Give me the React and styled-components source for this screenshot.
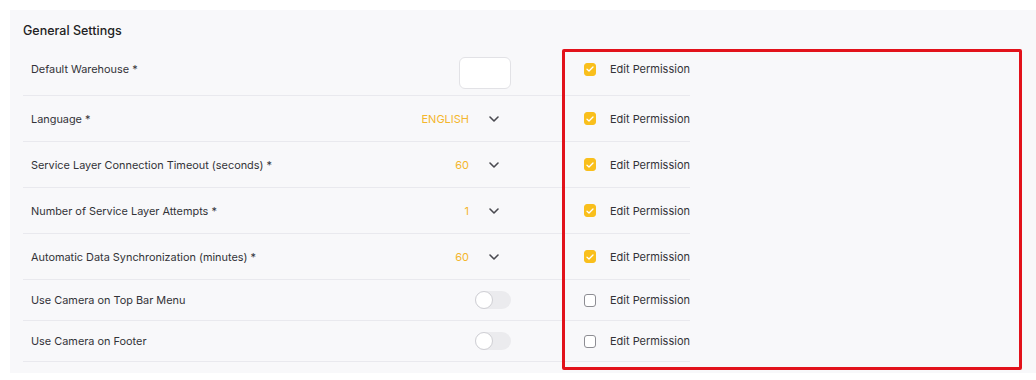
import React from 'react';
import styled, { createGlobalStyle } from 'styled-components';

const theme = {
    panel: '#f8f8fa',
    line: '#e9e9ee',
    text: '#333338',
    accent: '#f4b62c',
    check: '#f9bf1c',
    font: 'Inter, "Noto Sans", sans-serif'
};

const GlobalStyle = createGlobalStyle`
    body {
        margin: 0;
        background: #ffffff;
        font-family: ${theme.font};
        color: ${theme.text};
    }
`;

const Page = styled.div`
    padding: 10px 0 0 10px;
`;

const Panel = styled.section`
    position: relative;
    background: ${theme.panel};
    padding: 13px 13px 12px;
    height: 338px;
`;

const Title = styled.h2`
    margin: 0 0 11px;
    font-size: 12.5px;
    line-height: 16px;
    font-weight: 500;
    color: #222;
`;

const List = styled.div`
    width: 667px;
`;

const Row = styled.div`
    box-sizing: border-box;
    display: flex;
    align-items: center;
    height: ${(p) => p.$h}px;
    padding: 0 0 ${(p) => p.$pb || 0}px 8px;
    border-bottom: 1px solid ${theme.line};
`;

const Label = styled.span`
    flex: 1;
    font-size: 10.9px;
    line-height: 14px;
    color: ${theme.text};
`;

const Control = styled.div`
    width: 160px;
    align-self: stretch;
    display: flex;
    justify-content: flex-end;
    align-items: center;
`;

const Select = styled.div`
    display: flex;
    align-items: center;
    gap: 20px;
    padding-right: 12px;
`;

const Value = styled.span`
    font-size: 11px;
    color: ${theme.accent};
`;

const InputBox = styled.div`
    align-self: flex-end;
    margin-bottom: -1px;
    width: 50px;
    height: 30px;
    background: #fff;
    border: 1px solid #e2e2e6;
    border-radius: 6px;
`;

const Track = styled.div`
    position: relative;
    width: 36px;
    height: 18px;
    border-radius: 9px;
    background: #ebebee;
`;

const Knob = styled.div`
    position: absolute;
    left: 0;
    top: 0;
    width: 16px;
    height: 16px;
    border-radius: 50%;
    background: #fff;
    border: 1px solid #cfcfd4;
`;

const Permission = styled.label`
    display: flex;
    align-items: center;
    gap: 14px;
    margin-left: 73px;
    width: 106px;
    font-size: 11px;
    color: ${theme.text};
    white-space: nowrap;
`;

const Box = styled.span`
    width: 13px;
    height: 13px;
    box-sizing: border-box;
    border-radius: 3px;
    display: flex;
    align-items: center;
    justify-content: center;
    background: ${(p) => (p.$on ? theme.check : '#fff')};
    border: 1px solid ${(p) => (p.$on ? theme.check : '#8d8d93')};
`;

const Highlight = styled.div`
    position: absolute;
    left: 552px;
    top: 39px;
    width: 454px;
    height: 315px;
    border: 3px solid #e2121b;
    border-radius: 2px;
    pointer-events: none;
`;

const Chevron = () => (
    <svg width="10" height="6" viewBox="0 0 10 6" fill="none">
        <path d="M1 1l4 4 4-4" stroke="#4a4a50" strokeWidth="1.6" strokeLinecap="round" strokeLinejoin="round" />
    </svg>
);

const Check = () => (
    <svg width="8" height="6" viewBox="0 0 8 6" fill="none">
        <path d="M1 3.2l2 1.8L7 1" stroke="#fff" strokeWidth="1.3" strokeLinecap="round" strokeLinejoin="round" />
    </svg>
);

const settings = [
    { label: 'Default Warehouse *', type: 'input', h: 46, pb: 7, on: true },
    { label: 'Language *', type: 'select', value: 'ENGLISH', h: 46, on: true },
    { label: 'Service Layer Connection Timeout (seconds) *', type: 'select', value: '60', h: 46, on: true },
    { label: 'Number of Service Layer Attempts *', type: 'select', value: '1', h: 46, on: true },
    { label: 'Automatic Data Synchronization (minutes) *', type: 'select', value: '60', h: 46, on: true },
    { label: 'Use Camera on Top Bar Menu', type: 'toggle', h: 41, on: false },
    { label: 'Use Camera on Footer', type: 'toggle', h: 41, on: false }
];

const renderControl = (s) => {
    if (s.type === 'input') return <InputBox />;
    if (s.type === 'toggle') {
        return (
            <Track>
                <Knob />
            </Track>
        );
    }
    return (
        <Select>
            <Value>{s.value}</Value>
            <Chevron />
        </Select>
    );
};

const App = () => (
    <>
        <GlobalStyle />
        <Page>
            <Panel>
                <Title>General Settings</Title>
                <List>
                    {settings.map((s) => (
                        <Row key={s.label} $h={s.h} $pb={s.pb}>
                            <Label>{s.label}</Label>
                            <Control>{renderControl(s)}</Control>
                            <Permission>
                                <Box $on={s.on}>{s.on && <Check />}</Box>
                                Edit Permission
                            </Permission>
                        </Row>
                    ))}
                </List>
                <Highlight />
            </Panel>
        </Page>
    </>
);

export default App;
